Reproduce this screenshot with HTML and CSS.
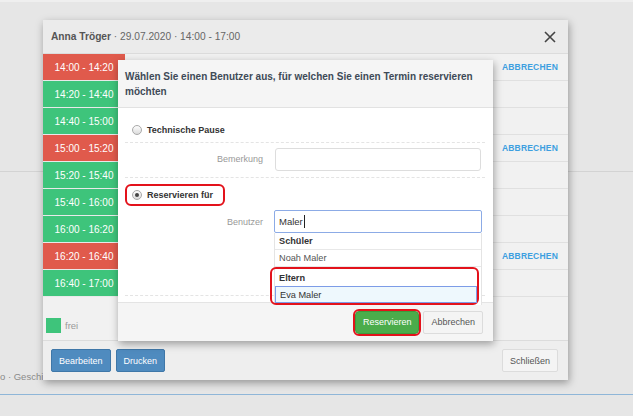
FILE: index.html
```html
<!DOCTYPE html>
<html lang="de">
<head>
    <meta charset="UTF-8">
    <title>Termin reservieren</title>
    <link rel="stylesheet" href="styles.css">
</head>
<body>
    <div class="page">
        <div class="page-head"></div>
        <div class="crumbs">o · Geschichte</div>
        <div class="page-rule"></div>
    </div>

    <div class="modal">
        <div class="modal-head">
            <div class="modal-title"><b>Anna Tröger</b> · 29.07.2020 · 14:00 - 17:00</div>
            <svg class="close" width="12" height="12" viewBox="0 0 12 12"><path d="M1 1L11 11M11 1L1 11" stroke="#444" stroke-width="1.6" fill="none"/></svg>
        </div>
        <div class="slots">
            <div class="slot-row"><div class="slot busy">14:00 - 14:20</div><div class="slot-info"><a>ABBRECHEN</a></div></div>
            <div class="slot-row"><div class="slot free">14:20 - 14:40</div><div class="slot-info"></div></div>
            <div class="slot-row"><div class="slot free">14:40 - 15:00</div><div class="slot-info"></div></div>
            <div class="slot-row"><div class="slot busy">15:00 - 15:20</div><div class="slot-info"><a>ABBRECHEN</a></div></div>
            <div class="slot-row"><div class="slot free">15:20 - 15:40</div><div class="slot-info"></div></div>
            <div class="slot-row"><div class="slot free">15:40 - 16:00</div><div class="slot-info"></div></div>
            <div class="slot-row"><div class="slot free">16:00 - 16:20</div><div class="slot-info"></div></div>
            <div class="slot-row"><div class="slot busy">16:20 - 16:40</div><div class="slot-info"><a>ABBRECHEN</a></div></div>
            <div class="slot-row"><div class="slot free">16:40 - 17:00</div><div class="slot-info"></div></div>
        </div>
        <div class="legend"><span class="swatch"></span>frei</div>
        <div class="modal-foot">
            <button class="btn btn-blue">Bearbeiten</button>
            <button class="btn btn-blue">Drucken</button>
            <button class="btn btn-light push">Schließen</button>
        </div>
    </div>

    <div class="dialog">
        <div class="dialog-head">Wählen Sie einen Benutzer aus, für welchen Sie einen Termin reservieren möchten</div>
        <div class="dialog-body">
            <div class="choice"><label class="radio-label"><span class="radio"></span>Technische Pause</label></div>
            <div class="field">
                <label class="field-label">Bemerkung</label>
                <div class="input"></div>
            </div>
            <div class="choice choice-short"><label class="radio-label marked"><span class="radio checked"></span>Reservieren für</label></div>
            <div class="field field-tall">
                <label class="field-label">Benutzer</label>
                <div class="combo">
                    <div class="input focus">Maler<span class="caret"></span></div>
                    <div class="dropdown">
                        <div class="opt group">Schüler</div>
                        <div class="opt">Noah Maler</div>
                        <div class="marked-group">
                            <div class="opt group">Eltern</div>
                            <div class="opt active">Eva Maler</div>
                        </div>
                    </div>
                </div>
            </div>
        </div>
        <div class="dialog-foot">
            <button class="btn btn-green marked-btn">Reservieren</button>
            <button class="btn btn-light">Abbrechen</button>
        </div>
    </div>
</body>
</html>
```

FILE: styles.css
```css
/* Basic styling */
* { margin: 0; padding: 0; box-sizing: border-box; }
body {
    font-family: "Liberation Sans", Arial, sans-serif;
    font-size: 10px;
    color: #333;
    background-color: #e6e6e6;
    width: 633px;
    height: 416px;
    overflow: hidden;
    position: relative;
}

/* page behind the modal */
.page-head { height: 172px; border-top: 2px solid #efefef; border-bottom: 1px solid #d3d3d3; }
.crumbs { margin-top: 199px; color: #8a8a8a; font-size: 9.5px; }
.page-rule { margin-top: 12px; border-top: 1px solid #8fb6d8; }

/* outer modal */
.modal {
    position: absolute;
    left: 43px;
    top: 20px;
    width: 525px;
    height: 360px;
    background-color: #f1f1f1;
    box-shadow: 1px 3px 8px rgba(0, 0, 0, 0.35);
    display: flex;
    flex-direction: column;
}
.modal-head {
    height: 34px;
    display: flex;
    align-items: center;
    justify-content: space-between;
    padding: 0 12px 0 8px;
    background-color: #ebebeb;
    border-bottom: 1px solid #dcdcdc;
}
.modal-title { font-size: 10.2px; color: #666; }
.modal-title b { color: #555; }
.slot-row { display: flex; height: 27px; }
.slot {
    width: 82px;
    display: flex;
    align-items: center;
    justify-content: center;
    color: #fff;
    font-size: 10px;
    border-bottom: 1px solid #e9e9e9;
}
.busy { background-color: #e05a4c; }
.free { background-color: #3ec47b; }
.slot-info {
    flex: 1;
    display: flex;
    align-items: center;
    justify-content: flex-end;
    padding-right: 10px;
    border-bottom: 1px solid #e0e0e0;
}
.slot-info a { color: #3d9fe0; font-weight: bold; font-size: 8.5px; letter-spacing: 0.2px; }
.legend {
    height: 44px;
    display: flex;
    align-items: center;
    padding: 13px 3px 0;
    color: #999;
    font-size: 9.5px;
    gap: 4px;
    border-bottom: 1px solid #dcdcdc;
}
.swatch { width: 15px; height: 15px; background-color: #3ec47b; }
.modal-foot {
    flex: 1;
    display: flex;
    align-items: flex-start;
    padding: 8px 10px 0 8px;
    gap: 5px;
    background-color: #eeeeee;
}
.push { margin-left: auto; }

.btn {
    font-family: inherit;
    font-size: 9px;
    height: 23px;
    padding: 0 7px;
    border-radius: 2px;
    cursor: pointer;
}
.btn-blue { background-color: #4f8bbf; border: 1px solid #3f77a8; color: #fff; }
.btn-light { background-color: #f4f4f4; border: 1px solid #dcdcdc; color: #555; }
.btn-green { background-color: #4bac4b; border: 1px solid #3e9a3e; color: #fff; }

/* reservation dialog */
.dialog {
    position: absolute;
    left: 118px;
    top: 60px;
    width: 375px;
    height: 281px;
    background-color: #fff;
    box-shadow: 1px 3px 8px rgba(0, 0, 0, 0.35);
    display: flex;
    flex-direction: column;
}
.dialog-head {
    height: 48px;
    padding: 9px 8px 0 7px;
    background-color: #f5f5f5;
    border-bottom: 1px solid #e2e2e2;
    font-size: 10px;
    font-weight: bold;
    line-height: 15px;
    color: #3e4a57;
}
.dialog-body { flex: 1; padding: 0 8px 0 7px; position: relative; }
.choice {
    height: 35px;
    display: flex;
    align-items: center;
    padding-top: 9px;
    border-bottom: 1px dashed #e4e4e4;
}
.choice-short { height: 29px; padding-top: 4px; border-bottom: none; }
.radio-label { display: flex; align-items: center; gap: 5px; font-weight: bold; font-size: 9px; color: #333; padding-left: 7px; }
.radio {
    width: 10px;
    height: 10px;
    border-radius: 50%;
    border: 1px solid #a9a9a9;
    background: linear-gradient(#fdfdfd, #dcdcdc);
    display: flex;
    align-items: center;
    justify-content: center;
}
.radio.checked::after { content: ""; width: 4px; height: 4px; border-radius: 50%; background-color: #444; }
.marked { border: 2px solid #e3121b; border-radius: 6px; height: 22px; padding: 0 10px 0 5px; }

.field {
    height: 35px;
    display: flex;
    align-items: flex-start;
    padding-top: 5px;
    border-bottom: 1px dashed #e4e4e4;
}
.field-tall { height: 89px; padding-top: 3px; }
.field-label { width: 138px; text-align: right; color: #999; font-size: 9px; margin-top: 6px; }
.field-tall .field-label { margin-top: 7px; }
.input {
    width: 206px;
    height: 23px;
    margin-left: 12px;
    border: 1px solid #ddd;
    border-radius: 3px;
    background-color: #fff;
    padding: 0 4px;
    display: flex;
    align-items: center;
    font-size: 9.5px;
    color: #333;
}
.combo { position: relative; margin-left: 11px; }
.combo .input { margin-left: 0; width: 208px; }
.focus { border-color: #8cabe6; border-radius: 2px; }
.caret { width: 1px; height: 13px; background-color: #222; margin-left: 1px; }
.dropdown {
    position: absolute;
    top: 23px;
    left: 0;
    width: 208px;
    background-color: #fff;
    border-left: 1px solid #e4e4e4;
    border-right: 1px solid #e4e4e4;
}
.opt {
    height: 17px;
    display: flex;
    align-items: center;
    padding: 0 4px;
    border-bottom: 1px solid #e8e8e8;
    color: #555;
    font-size: 9.2px;
}
.opt.group { font-weight: bold; color: #333; }
.marked-group { border: 2px solid #e3121b; border-radius: 6px; margin: 0 2px 0 -5px; padding-left: 3px; }
.marked-group .opt { border-bottom: none; }
.opt.active { background-color: #eef8fd; border: 1px solid #7d9ce7; color: #333; }

.dialog-foot {
    height: 39px;
    display: flex;
    align-items: center;
    justify-content: flex-end;
    gap: 4px;
    padding: 0 10px 0 0;
    background-color: #f5f5f5;
    border-top: 1px solid #e4e4e4;
}
.marked-btn { outline: 2px solid #e3121b; outline-offset: 0; border-radius: 4px; }
```
